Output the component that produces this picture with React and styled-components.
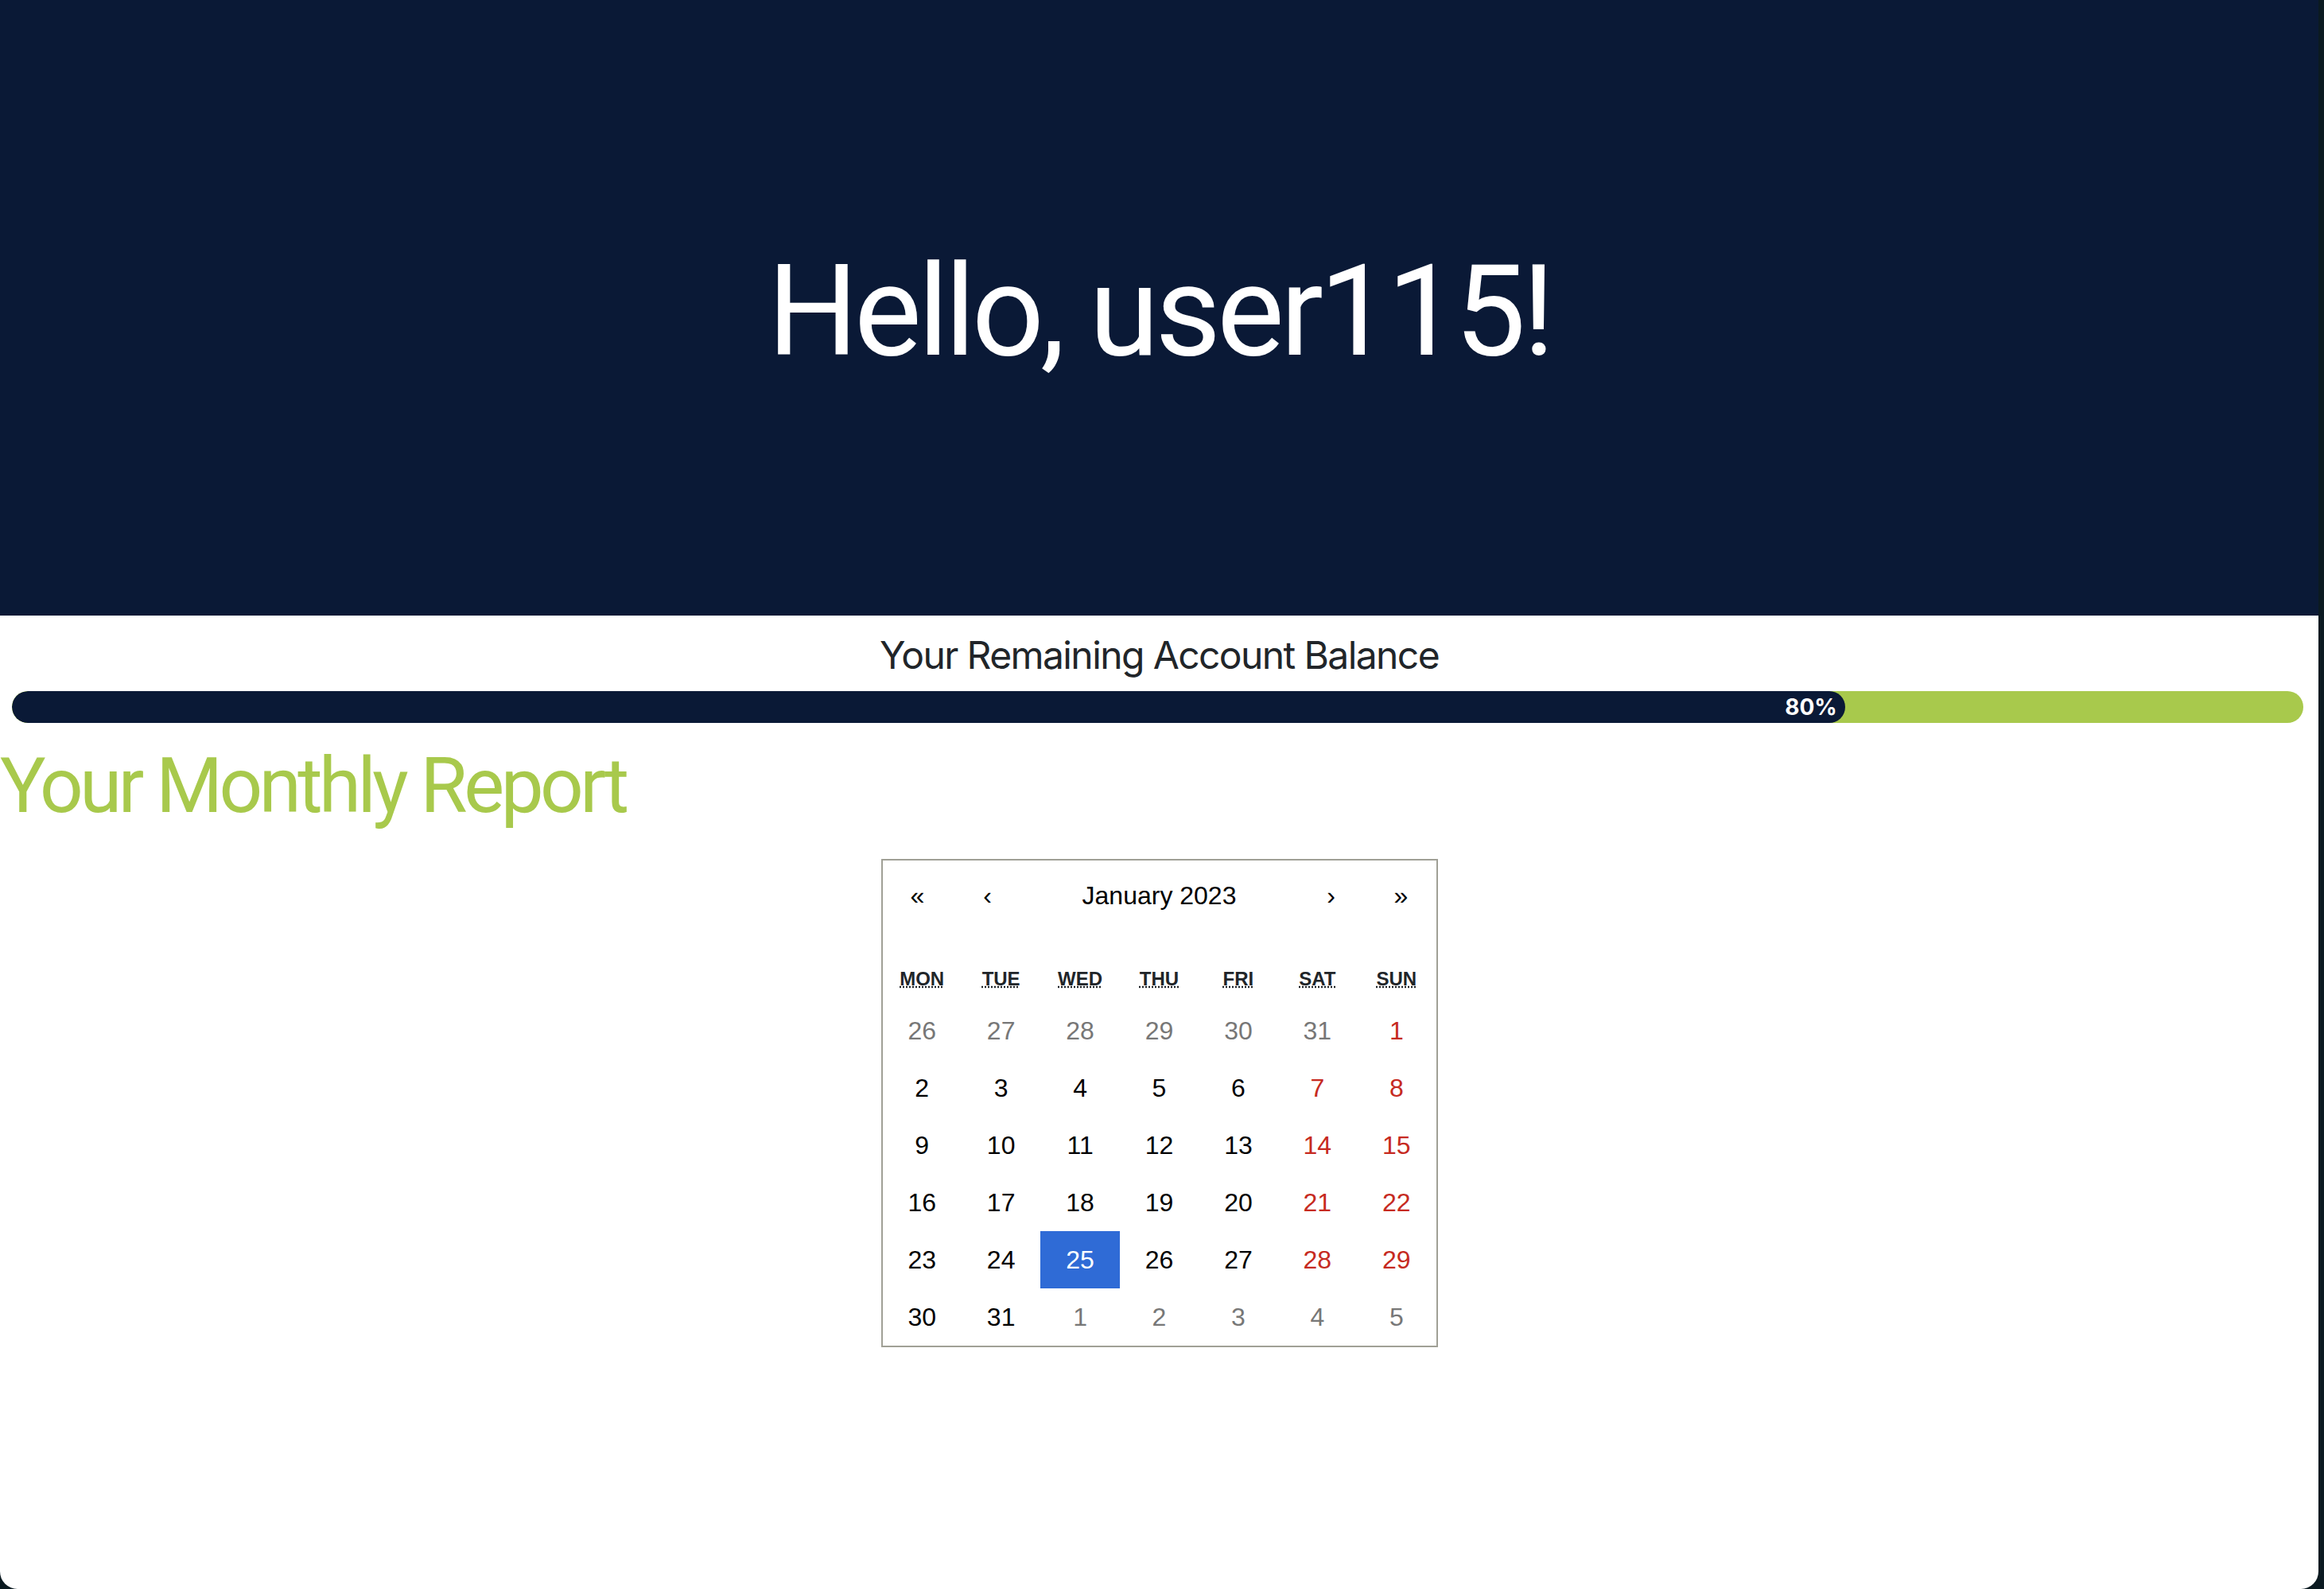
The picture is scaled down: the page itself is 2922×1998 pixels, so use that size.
import React from 'react';
import styled, { createGlobalStyle } from 'styled-components';

const Global = createGlobalStyle`
  html, body { margin: 0; padding: 0; background: #0b1a21; }
  body { width: 2922px; height: 1998px; overflow: hidden; }
  #root { width: 100%; height: 100%; }
`;

const Window = styled.div`
  width: 2915px;
  height: 1998px;
  background: #ffffff;
  border-radius: 0 0 22px 22px;
  overflow: hidden;
  font-family: Inter, "Noto Sans", sans-serif;
  color: #212529;
`;

const Header = styled.header`
  height: 774px;
  box-sizing: border-box;
  padding-top: 9px;
  background: #0a1936;
  display: flex;
  align-items: center;
  justify-content: center;
`;

const Greeting = styled.h1`
  margin: 0;
  font-family: Roboto, "Open Sans", sans-serif;
  font-weight: 400;
  font-size: 160px;
  line-height: 1.2;
  letter-spacing: -5px;
  color: #ffffff;
`;

const BalanceSection = styled.section`
  display: flex;
  flex-direction: column;
  align-items: stretch;
`;

const BalanceTitle = styled.h4`
  margin: 21px 0 16px;
  text-align: center;
  font-family: Inter, "Noto Sans", sans-serif;
  font-weight: 400;
  font-size: 48px;
  line-height: 1.2;
  letter-spacing: -1.6px;
  color: #212529;
`;

const ProgressTrack = styled.div`
  height: 40px;
  margin: 0 19px 0 15px;
  border-radius: 20px;
  background: #a8c94c;
  overflow: hidden;
  display: flex;
`;

const ProgressFill = styled.div`
  height: 100%;
  box-sizing: border-box;
  border-radius: 20px;
  background: #0a1936;
  display: flex;
  align-items: center;
  justify-content: flex-end;
  padding-right: 10px;
`;

const ProgressLabel = styled.span`
  font-family: Inter, "Noto Sans", sans-serif;
  font-weight: 700;
  font-size: 28px;
  line-height: 1;
  color: #ffffff;
`;

const ReportTitle = styled.h2`
  margin: 22px 0 34px;
  font-family: Roboto, "Open Sans", sans-serif;
  font-weight: 400;
  font-size: 96px;
  line-height: 1.2;
  letter-spacing: -4.5px;
  color: #a8c94c;
`;

const Calendar = styled.div`
  width: 700px;
  margin: 0 auto;
  box-sizing: border-box;
  border: 2px solid #a0a096;
  background: #ffffff;
  font-family: "Liberation Sans", Arial, sans-serif;
  font-size: 32px;
  line-height: 36px;
`;

const Nav = styled.div`
  display: flex;
  height: 88px;
  margin-bottom: 32px;
`;

const NavButton = styled.button`
  min-width: 88px;
  flex-grow: ${(p) => (p.$grow ? 1 : 0)};
  margin: 0;
  padding: 0;
  border: 0;
  background: none;
  font: inherit;
  color: #000000;
  cursor: pointer;
`;

const Weekdays = styled.div`
  display: grid;
  grid-template-columns: repeat(7, 1fr);
  height: 58px;
`;

const Weekday = styled.div`
  display: flex;
  align-items: center;
  justify-content: center;
  font-size: 24px;
  font-weight: 700;
  text-transform: uppercase;
  color: #212529;
`;

const WeekdayAbbr = styled.abbr`
  text-decoration: underline dotted;
  text-decoration-skip-ink: none;
  cursor: help;
`;

const Days = styled.div`
  display: grid;
  grid-template-columns: repeat(7, 1fr);
`;

const Tile = styled.button`
  height: 72px;
  margin: 0;
  padding: 0;
  border: 0;
  font: inherit;
  line-height: 32px;
  text-align: center;
  background: ${(p) => (p.$active ? '#2f6bd6' : 'transparent')};
  color: ${(p) =>
    p.$active ? '#ffffff' : p.$neighbor ? '#777777' : p.$weekend ? '#c62a21' : '#000000'};
`;

const weekdays = [
  ['Mon', 'Monday'],
  ['Tue', 'Tuesday'],
  ['Wed', 'Wednesday'],
  ['Thu', 'Thursday'],
  ['Fri', 'Friday'],
  ['Sat', 'Saturday'],
  ['Sun', 'Sunday'],
];

const buildDays = () => {
  const list = [];
  [26, 27, 28, 29, 30, 31].forEach((d) => list.push({ d, neighbor: true }));
  for (let d = 1; d <= 31; d++) list.push({ d, neighbor: false });
  [1, 2, 3, 4, 5].forEach((d) => list.push({ d, neighbor: true }));
  return list.map((item, i) => ({ ...item, weekend: i % 7 >= 5 }));
};

const days = buildDays();

export default function App() {
  return (
    <>
      <Global />
      <Window>
        <Header>
          <Greeting>Hello, user115!</Greeting>
        </Header>
        <BalanceSection>
          <BalanceTitle>Your Remaining Account Balance</BalanceTitle>
          <ProgressTrack>
            <ProgressFill style={{ width: '80%' }}>
              <ProgressLabel>80%</ProgressLabel>
            </ProgressFill>
          </ProgressTrack>
        </BalanceSection>
        <ReportTitle>Your Monthly Report</ReportTitle>
        <Calendar>
          <Nav>
            <NavButton>«</NavButton>
            <NavButton>‹</NavButton>
            <NavButton $grow>January 2023</NavButton>
            <NavButton>›</NavButton>
            <NavButton>»</NavButton>
          </Nav>
          <Weekdays>
            {weekdays.map(([s, l]) => (
              <Weekday key={s}>
                <WeekdayAbbr title={l}>{s}</WeekdayAbbr>
              </Weekday>
            ))}
          </Weekdays>
          <Days>
            {days.map((item, i) => (
              <Tile
                key={i}
                $neighbor={item.neighbor}
                $weekend={item.weekend}
                $active={!item.neighbor && item.d === 25}
              >
                {item.d}
              </Tile>
            ))}
          </Days>
        </Calendar>
      </Window>
    </>
  );
}
